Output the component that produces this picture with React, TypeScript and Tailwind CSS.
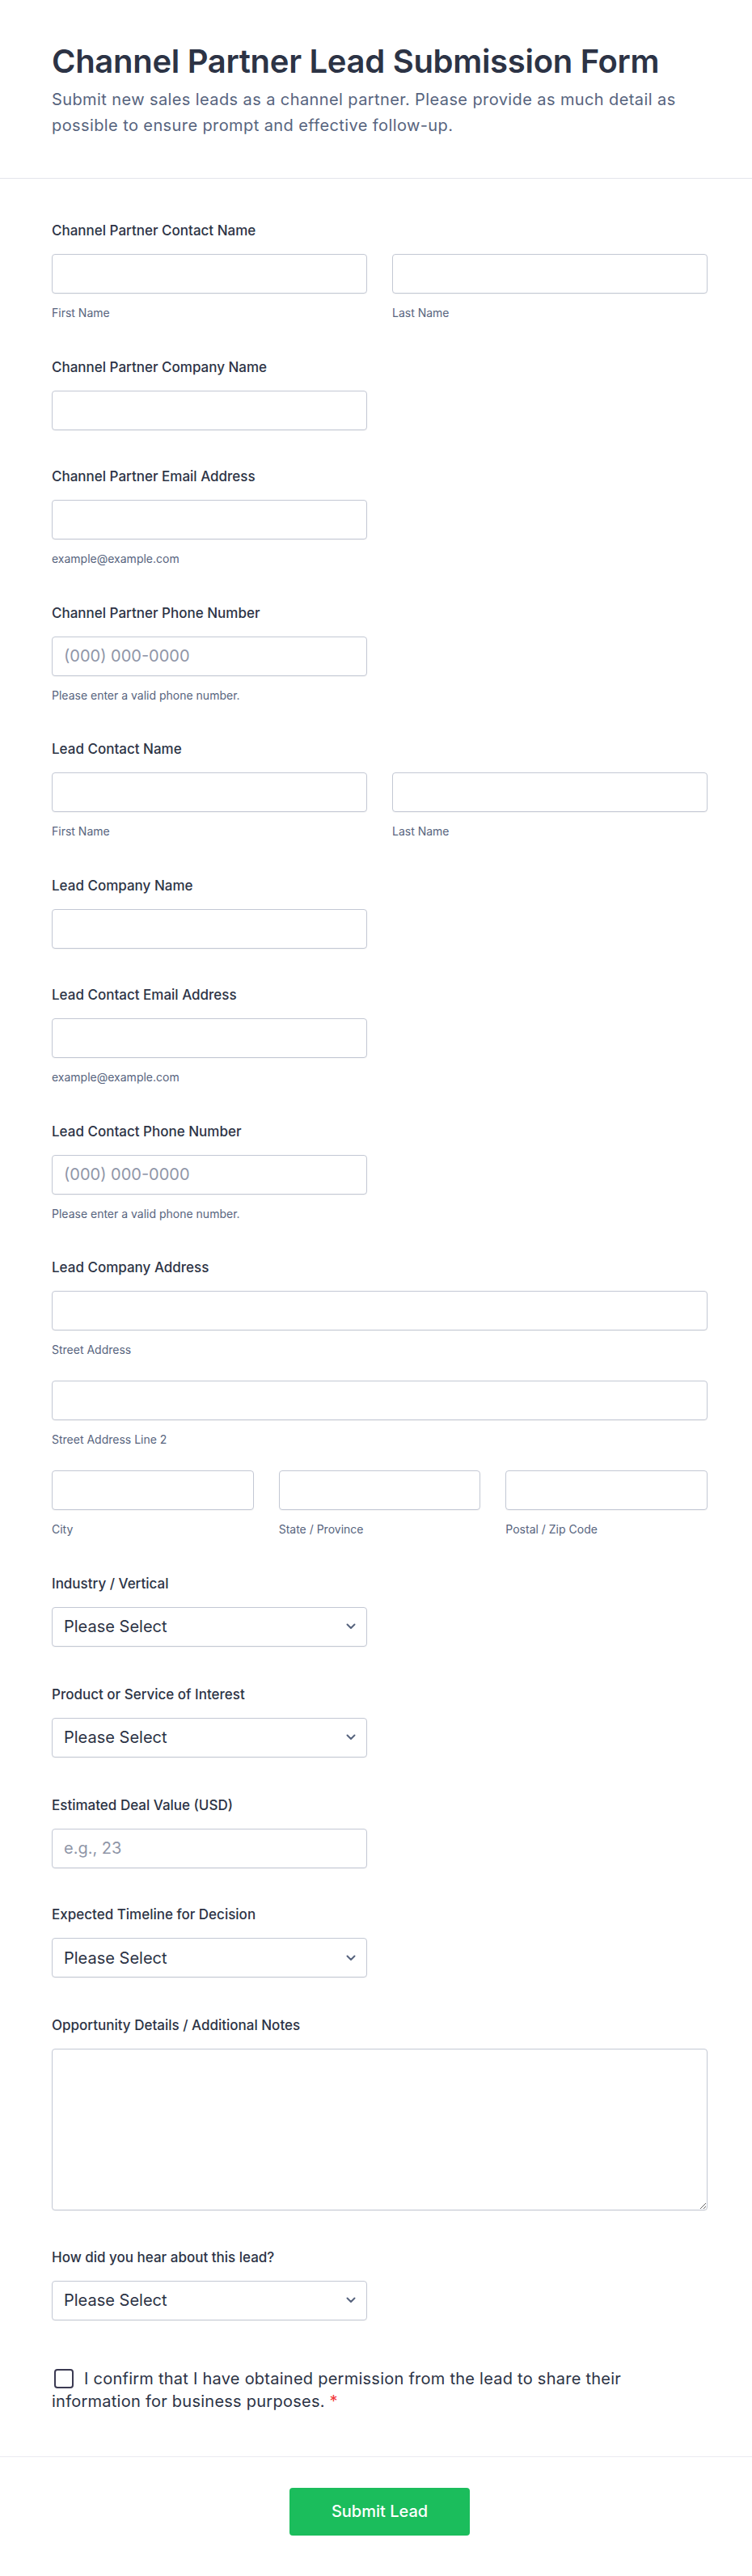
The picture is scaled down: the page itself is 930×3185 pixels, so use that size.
import React from "react";

const inputCls =
  "block w-full h-[49px] rounded-[4px] border border-[#c3c8d4] bg-white px-[14px] text-[20px] text-[#2c3345] placeholder:text-[#8f96a8] outline-none shadow-[0_1px_1px_rgba(0,0,0,0.04)]";

function Label({ children }: { children: React.ReactNode }) {
  return (
    <label className="block text-[17px] leading-[28px] font-medium text-[#2c3345]">
      {children}
    </label>
  );
}

function Sub({ children }: { children: React.ReactNode }) {
  return <p className="mt-[14px] text-[14px] leading-[19px] text-[#57647e]">{children}</p>;
}

function Field({ label, children }: { label: string; children: React.ReactNode }) {
  return (
    <div>
      <Label>{label}</Label>
      <div className="mt-[15px]">{children}</div>
    </div>
  );
}

function NameRow() {
  return (
    <div className="grid grid-cols-2 gap-x-[31px]">
      <div>
        <input className={inputCls} />
        <Sub>First Name</Sub>
      </div>
      <div>
        <input className={inputCls} />
        <Sub>Last Name</Sub>
      </div>
    </div>
  );
}

function Select() {
  return (
    <div className="relative w-[390px] mb-[1.5px]">
      <select
        defaultValue=""
        className="block w-full h-[49px] appearance-none rounded-[4px] border border-[#c3c8d4] bg-white pl-[14px] pr-10 text-[20px] text-[#2c3345] outline-none shadow-[0_1px_1px_rgba(0,0,0,0.04)]"
      >
        <option value="">Please Select</option>
      </select>
      <svg
        className="pointer-events-none absolute right-[14px] top-1/2 -translate-y-1/2"
        width="12"
        height="8"
        viewBox="0 0 12 8"
        fill="none"
      >
        <path d="M1.5 1.5L6 6L10.5 1.5" stroke="#57647e" strokeWidth="2" strokeLinecap="round" strokeLinejoin="round" />
      </svg>
    </div>
  );
}

export default function App() {
  return (
    <div className="min-h-screen bg-white font-['Inter','Noto_Sans',sans-serif] text-[#2c3345]">
      {/* Header */}
      <header className="pl-[64px] pr-[55px] pt-[52px] pb-[49px] border-b border-[#e3e5ec]">
        <h1 className="text-[40px] leading-[48px] font-semibold tracking-[-0.3px] text-[#2c3345]">
          Channel Partner Lead Submission Form
        </h1>
        <p className="mt-[7px] max-w-[790px] text-[20px] leading-[32px] tracking-[0.4px] text-[#57647e]">
          Submit new sales leads as a channel partner. Please provide as much detail as possible to ensure prompt and
          effective follow-up.
        </p>
      </header>

      {/* Fields */}
      <form className="pl-[64px] pr-[55px] pt-[50px] flex flex-col gap-[43.5px]">
        <Field label="Channel Partner Contact Name">
          <NameRow />
        </Field>

        <Field label="Channel Partner Company Name">
          <input className={inputCls + " !w-[390px]"} />
        </Field>

        <Field label="Channel Partner Email Address">
          <input className={inputCls + " !w-[390px]"} />
          <Sub>example@example.com</Sub>
        </Field>

        <Field label="Channel Partner Phone Number">
          <input className={inputCls + " !w-[390px]"} placeholder="(000) 000-0000" />
          <Sub>Please enter a valid phone number.</Sub>
        </Field>

        <Field label="Lead Contact Name">
          <NameRow />
        </Field>

        <Field label="Lead Company Name">
          <input className={inputCls + " !w-[390px]"} />
        </Field>

        <Field label="Lead Contact Email Address">
          <input className={inputCls + " !w-[390px]"} />
          <Sub>example@example.com</Sub>
        </Field>

        <Field label="Lead Contact Phone Number">
          <input className={inputCls + " !w-[390px]"} placeholder="(000) 000-0000" />
          <Sub>Please enter a valid phone number.</Sub>
        </Field>

        <Field label="Lead Company Address">
          <div className="flex flex-col gap-[29px]">
            <div>
              <input className={inputCls} />
              <Sub>Street Address</Sub>
            </div>
            <div>
              <input className={inputCls} />
              <Sub>Street Address Line 2</Sub>
            </div>
            <div className="grid grid-cols-3 gap-x-[31px]">
              <div>
                <input className={inputCls} />
                <Sub>City</Sub>
              </div>
              <div>
                <input className={inputCls} />
                <Sub>State / Province</Sub>
              </div>
              <div>
                <input className={inputCls} />
                <Sub>Postal / Zip Code</Sub>
              </div>
            </div>
          </div>
        </Field>

        <Field label="Industry / Vertical">
          <Select />
        </Field>

        <Field label="Product or Service of Interest">
          <Select />
        </Field>

        <Field label="Estimated Deal Value (USD)">
          <input className={inputCls + " !w-[390px]"} placeholder="e.g., 23" />
        </Field>

        <Field label="Expected Timeline for Decision">
          <Select />
        </Field>

        <Field label="Opportunity Details / Additional Notes">
          <textarea className="block w-full h-[200px] rounded-[4px] border border-[#c3c8d4] bg-white px-[14px] py-[10px] text-[20px] text-[#2c3345] outline-none shadow-[0_1px_1px_rgba(0,0,0,0.04)]" />
        </Field>

        <Field label="How did you hear about this lead?">
          <Select />
        </Field>

        <div className="mt-[13px] max-w-[730px] text-[20px] leading-[28px] tracking-[0.25px] text-[#2c3345]">
          <span className="inline-block align-top mt-[2px] w-[24px] h-[24px] ml-[3px] mr-[13px] rounded-[4px] border-2 border-[#3b3a52] bg-white" />
          I confirm that I have obtained permission from the lead to share their information for business purposes.{" "}
          <span className="text-[#f23a3c]">*</span>
        </div>
      </form>

      {/* Footer */}
      <div className="mt-[54px] border-t border-[#eaebf2] pt-[38px] pb-[51px] pl-[64px] pr-[55px] flex justify-center">
        <button
          type="button"
          className="w-[223px] h-[59px] rounded-[4px] bg-[#1bbd5c] text-white text-[20px] font-medium"
        >
          Submit Lead
        </button>
      </div>
    </div>
  );
}
